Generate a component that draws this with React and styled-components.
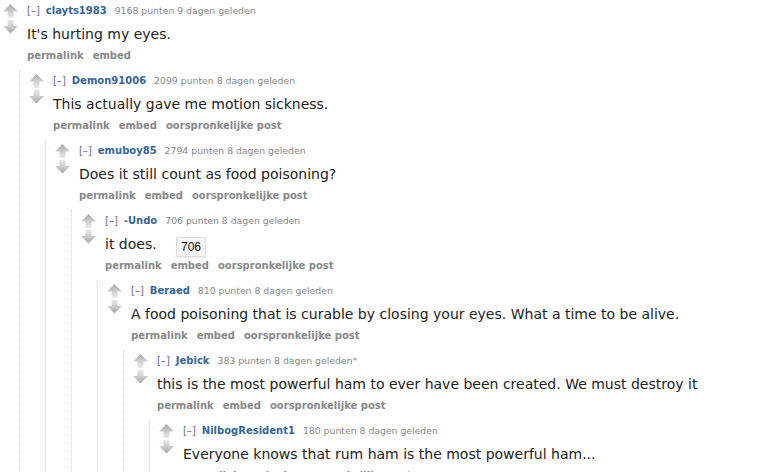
import React, { useId } from "react";
import styled, { createGlobalStyle } from "styled-components";

const GlobalStyle = createGlobalStyle`
  html, body {
    margin: 0;
    padding: 0;
    background: #fff;
    font-family: "DejaVu Sans", Verdana, sans-serif;
    overflow: hidden;
  }
`;

const Thread = styled.div`
  padding: 0 0 0 3px;
  width: 780px;
  height: 472px;
  overflow: hidden;
`;

const StyledComment = styled.div`
  padding-top: 1px;
`;

const Row = styled.div`
  display: flex;
  align-items: flex-start;
`;

const MidCol = styled.div`
  width: 15px;
  flex: none;
  padding-top: 3px;
  margin-right: 9px;
`;

const Entry = styled.div`
  flex: 1;
  min-width: 0;
`;

const Tagline = styled.p`
  margin: 3px 0 0;
  font-size: 10px;
  line-height: 14px;
  color: #888;
  white-space: nowrap;
`;

const Expand = styled.span`
  color: #6a6a9c;
  margin-right: 6px;
`;

const Author = styled.span`
  color: #369;
  font-weight: bold;
  margin-right: 8px;
`;

const Meta = styled.span`
  font-size: 9.3px;
`;

const Body = styled.div`
  position: relative;
  margin: 6px 0 0;
  font-size: 14px;
  line-height: 20px;
  color: #222;
  white-space: nowrap;
`;

const Tooltip = styled.span`
  position: absolute;
  left: 71px;
  top: 3px;
  padding: 2px 4px;
  font-family: "Liberation Sans", Arial, sans-serif;
  font-size: 12px;
  line-height: 14px;
  color: #111;
  background: #f6f6f6;
  border: 1px solid #ddd;
  border-radius: 2px;
  box-shadow: 0 1px 1px rgba(0, 0, 0, 0.08);
`;

const Buttons = styled.ul`
  display: flex;
  gap: 9px;
  list-style: none;
  margin: 5px 0 0;
  padding: 0;
  font-size: 10px;
  line-height: 14px;
  font-weight: bold;
  color: #888;
`;

const Child = styled.div`
  margin: 7px 0 0 16px;
  padding-left: 9px;
  border-left: 1px dotted #d4d4f0;
  min-height: 600px;
`;

function Arrows() {
  const id = useId();
  return (
    <svg width="15" height="30" viewBox="0 0 15 30">
      <defs>
        <linearGradient id={`${id}u`} x1="0" y1="0" x2="0" y2="1">
          <stop offset="0" stopColor="#a9a9a9" />
          <stop offset="1" stopColor="#ececec" />
        </linearGradient>
        <linearGradient id={`${id}d`} x1="0" y1="0" x2="0" y2="1">
          <stop offset="0" stopColor="#ececec" />
          <stop offset="1" stopColor="#a9a9a9" />
        </linearGradient>
      </defs>
      <path d="M7.5 0 L15 7.5 L10.5 7.5 L10.5 14 L4.5 14 L4.5 7.5 L0 7.5 Z" fill={`url(#${id}u)`} />
      <path d="M4.5 15.5 L10.5 15.5 L10.5 22 L15 22 L7.5 29.5 L0 22 L4.5 22 Z" fill={`url(#${id}d)`} />
    </svg>
  );
}

function Comment({ comment }) {
  const { author, points, days, edited, body, buttons, tooltip, child } = comment;
  return (
    <StyledComment>
      <Row>
        <MidCol>
          <Arrows />
        </MidCol>
        <Entry>
          <Tagline>
            <Expand>[–]</Expand>
            <Author>{author}</Author>
            <Meta>
              {points} punten {days} dagen geleden{edited ? "*" : ""}
            </Meta>
          </Tagline>
          <Body>
            {body}
            {tooltip && <Tooltip>{tooltip}</Tooltip>}
          </Body>
          <Buttons>
            {buttons.map((b) => (
              <li key={b}>{b}</li>
            ))}
          </Buttons>
        </Entry>
      </Row>
      {child && (
        <Child>
          <Comment comment={child} />
        </Child>
      )}
    </StyledComment>
  );
}

const full = ["permalink", "embed", "oorspronkelijke post"];

const thread = {
  author: "clayts1983",
  points: 9168,
  days: 9,
  body: "It's hurting my eyes.",
  buttons: ["permalink", "embed"],
  child: {
    author: "Demon91006",
    points: 2099,
    days: 8,
    body: "This actually gave me motion sickness.",
    buttons: full,
    child: {
      author: "emuboy85",
      points: 2794,
      days: 8,
      body: "Does it still count as food poisoning?",
      buttons: full,
      child: {
        author: "-Undo",
        points: 706,
        days: 8,
        body: "it does.",
        tooltip: "706",
        buttons: full,
        child: {
          author: "Beraed",
          points: 810,
          days: 8,
          body: "A food poisoning that is curable by closing your eyes. What a time to be alive.",
          buttons: full,
          child: {
            author: "Jebick",
            points: 383,
            days: 8,
            edited: true,
            body: "this is the most powerful ham to ever have been created. We must destroy it",
            buttons: full,
            child: {
              author: "NilbogResident1",
              points: 180,
              days: 8,
              body: "Everyone knows that rum ham is the most powerful ham...",
              buttons: full,
            },
          },
        },
      },
    },
  },
};

export default function App() {
  return (
    <>
      <GlobalStyle />
      <Thread>
        <Comment comment={thread} />
      </Thread>
    </>
  );
}
